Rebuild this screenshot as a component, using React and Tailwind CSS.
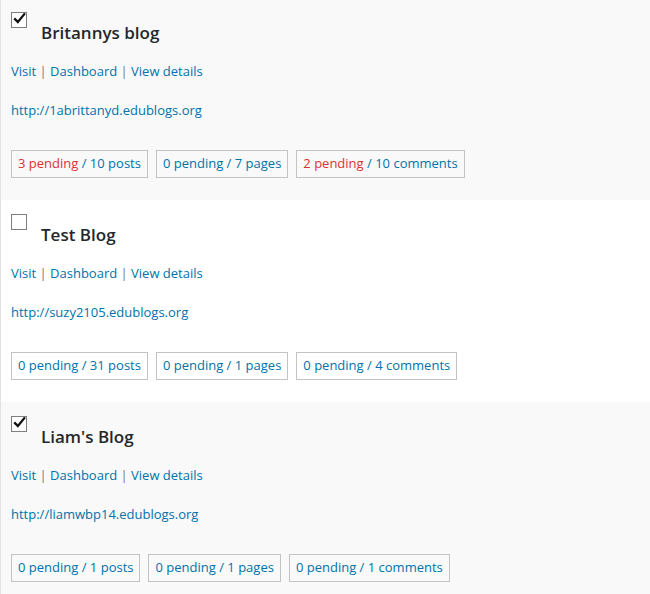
import React from "react";

function Check({ checked }) {
  return (
    <div className="w-4 h-4 border border-[#7e7e7e] bg-white flex items-center justify-center">
      {checked && (
        <svg width="16" height="16" viewBox="0 0 16 16" className="-mt-[3px] ml-[1px]">
          <path d="M2.5 8.2 L6 11.8 L13.8 2.2" fill="none" stroke="#111" strokeWidth="2.8" strokeLinecap="square" strokeLinejoin="miter" />
        </svg>
      )}
    </div>
  );
}

function Badge({ pending, total, label, red }) {
  return (
    <span className="border border-[#c3c3c3] h-[28px] px-[6px] flex items-center whitespace-nowrap">
      <span className={red ? "text-[#dc3232]" : "text-[#0073aa]"}>{pending} pending</span>
      <span className="text-[#0073aa]">&nbsp;/ {total} {label}</span>
    </span>
  );
}

function Row({ checked, title, url, badges, bg, first }) {
  return (
    <div className={`${bg} ${first ? "-mt-[2px]" : ""} h-[202px] pl-[10px] pt-[14px]`}>
      <Check checked={checked} />
      <div className="ml-[30px] -mt-[7px] text-[17px] leading-[23px] font-semibold text-[#23282d]">{title}</div>
      <div className="mt-[17px] text-[13px] leading-[20px] text-[#0073aa]">
        Visit <span className="text-[#72777c]">|</span> Dashboard <span className="text-[#72777c]">|</span> View details
      </div>
      <div className="mt-[19px] text-[13px] leading-[20px] text-[#0073aa]">{url}</div>
      <div className="mt-[30px] flex gap-[8px] text-[13px]">
        {badges.map((b, i) => (
          <Badge key={i} {...b} />
        ))}
      </div>
    </div>
  );
}

export default function App() {
  return (
    <div className="w-[650px] h-[594px] overflow-hidden border-l border-[#e2e2e2]" style={{ fontFamily: '"Open Sans", sans-serif' }}>
      <Row
        first
        bg="bg-[#f9f9f9]"
        checked
        title="Britannys blog"
        url="http://1abrittanyd.edublogs.org"
        badges={[
          { pending: 3, total: 10, label: "posts", red: true },
          { pending: 0, total: 7, label: "pages" },
          { pending: 2, total: 10, label: "comments", red: true },
        ]}
      />
      <Row
        bg="bg-white"
        title="Test Blog"
        url="http://suzy2105.edublogs.org"
        badges={[
          { pending: 0, total: 31, label: "posts" },
          { pending: 0, total: 1, label: "pages" },
          { pending: 0, total: 4, label: "comments" },
        ]}
      />
      <Row
        bg="bg-[#f9f9f9]"
        checked
        title="Liam's Blog"
        url="http://liamwbp14.edublogs.org"
        badges={[
          { pending: 0, total: 1, label: "posts" },
          { pending: 0, total: 1, label: "pages" },
          { pending: 0, total: 1, label: "comments" },
        ]}
      />
    </div>
  );
}
